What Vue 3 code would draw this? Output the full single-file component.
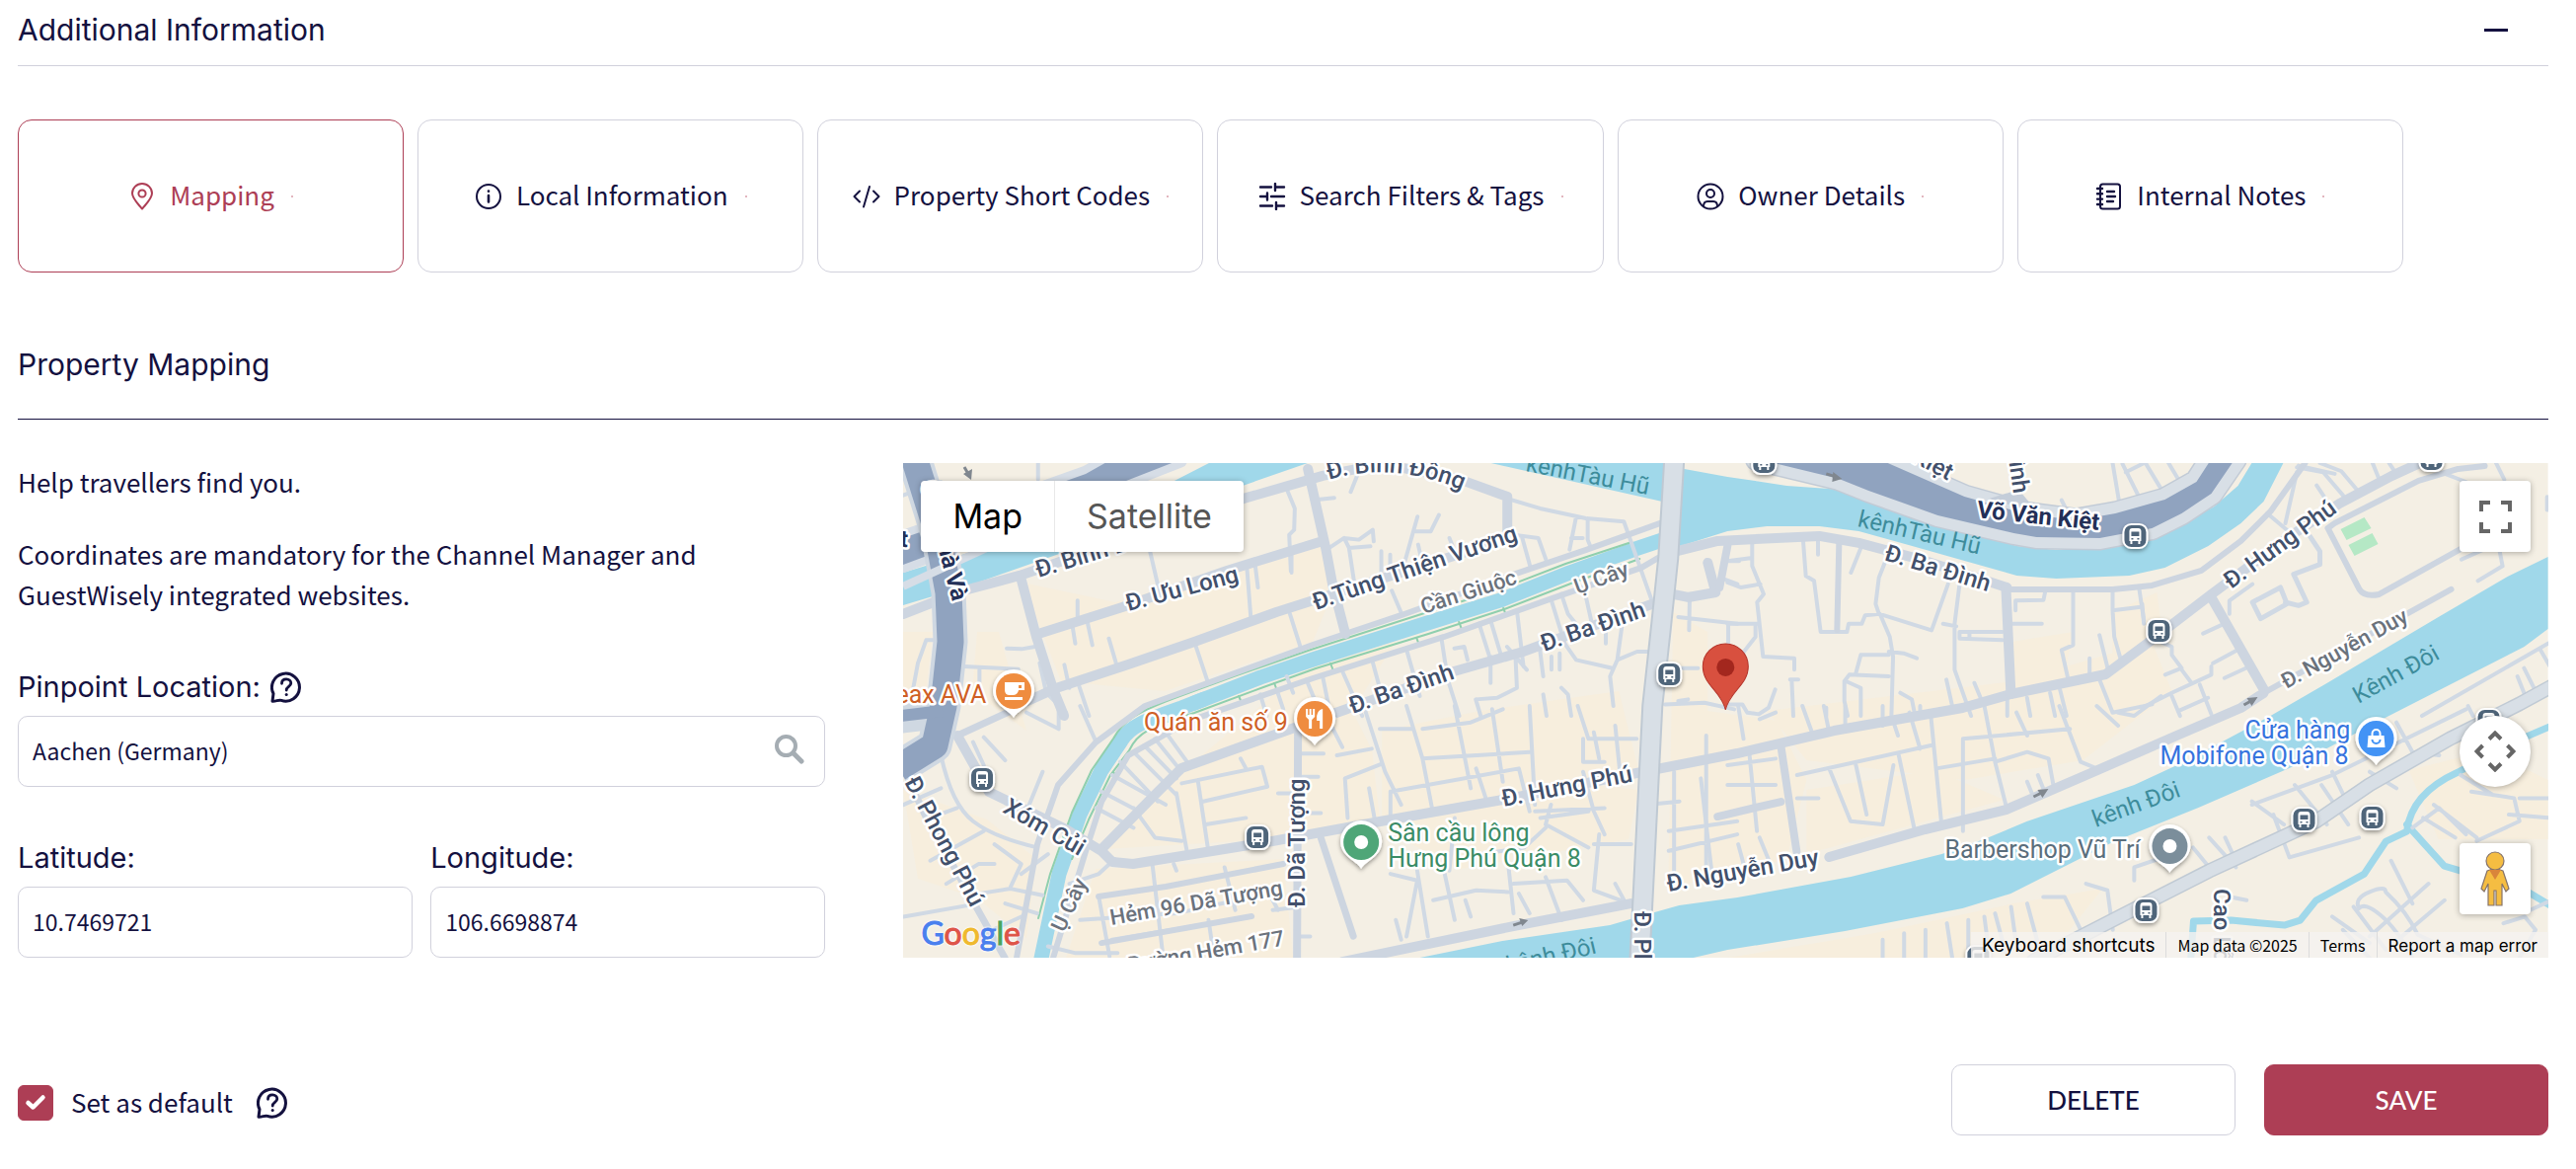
<script setup>
import { ref } from 'vue'

const tabs = [
  { id: 'mapping', label: 'Mapping' },
  { id: 'local', label: 'Local Information' },
  { id: 'codes', label: 'Property Short Codes' },
  { id: 'filters', label: 'Search Filters & Tags' },
  { id: 'owner', label: 'Owner Details' },
  { id: 'notes', label: 'Internal Notes' },
]
const activeTab = ref('mapping')
const location = ref('Aachen (Germany)')
const latitude = ref('10.7469721')
const longitude = ref('106.6698874')
const isDefault = ref(true)

const busStops = [
  [1691, 683], [2163, 543], [1787, 468], [2463, 465], [2187, 639], [995, 789],
  [1274, 848], [2174, 922], [2334, 830], [2403, 828], [2521, 730], [2004, 970],
]
const pois = [
  { x: 1027, y: 700, color: '#ef8c3f', kind: 'cafe' },
  { x: 1332, y: 728, color: '#ef8c3f', kind: 'food' },
  { x: 1379, y: 853, color: '#4fa678', kind: 'dot' },
  { x: 2198, y: 857, color: '#7b8e9b', kind: 'dot' },
  { x: 2407, y: 748, color: '#4393f5', kind: 'shop' },
]
const labels = [
  { t: 'Đ. Bình Đông', x: 1052, y: 585, r: -17 },
  { t: 'Đ. Ưu Long', x: 1143, y: 619, r: -15 },
  { t: 'Đ.Tùng Thiện Vương', x: 1333, y: 618, r: -19 },
  { t: 'Cần Giuộc', x: 1442, y: 622, r: -18, c: 'minor' },
  { t: 'Ụ Cây', x: 1598, y: 602, r: -20, c: 'minor' },
  { t: 'Đ. Ba Đình', x: 1564, y: 660, r: -19 },
  { t: 'Đ. Ba Đình', x: 1370, y: 723, r: -19 },
  { t: 'kênhTàu Hũ', x: 1545, y: 477, r: 11, c: 'water' },
  { t: 'kênhTàu Hũ', x: 1881, y: 533, r: 13, c: 'water' },
  { t: 'Đ. Ba Đình', x: 1908, y: 567, r: 17 },
  { t: 'Võ Văn Kiệt', x: 2002, y: 524, r: 6, c: 'highway' },
  { t: 'Cầu Chà Và', x: 933, y: 490, r: 75, c: 'highway' },
  { t: 'Kiệt', x: 877, y: 552, r: 3, c: 'highway' },
  { t: 'Kiệt', x: 1936, y: 467, r: 28 },
  { t: 'Bình', x: 2033, y: 453, r: 82 },
  { t: 'Đ. Hưng Phú', x: 2260, y: 597, r: -36 },
  { t: 'Đ. Nguyễn Duy', x: 2316, y: 698, r: -29, c: 'minor' },
  { t: 'Kênh Đôi', x: 2389, y: 713, r: -29, c: 'water' },
  { t: 'Đ. Hưng Phú', x: 1523, y: 817, r: -11 },
  { t: 'Đ. Nguyễn Duy', x: 1690, y: 903, r: -10 },
  { t: 'Đ. Phong Phú', x: 916, y: 792, r: 62 },
  { t: 'Xóm Củi', x: 1015, y: 822, r: 30 },
  { t: 'Ụ Cây', x: 1078, y: 945, r: -65, c: 'minor' },
  { t: 'Hẻm 96 Dã Tượng', x: 1126, y: 937, r: -10, c: 'minor' },
  { t: 'Đường Hẻm 177', x: 1144, y: 985, r: -10, c: 'minor' },
  { t: 'Đ. Dã Tượng', x: 1322, y: 919, r: -90 },
  { t: 'Đ. Phạm Hùng', x: 1656, y: 923, r: 90 },
  { t: 'kênh Đôi', x: 1528, y: 986, r: -13, c: 'water' },
  { t: 'kênh Đôi', x: 2123, y: 838, r: -20, c: 'water' },
  { t: 'Cao Lỗ', x: 2243, y: 900, r: 90 },
  { t: 'Reax AVA', x: 892, y: 712, r: 0, c: 'orange' },
  { t: 'Quán ăn số 9', x: 1159, y: 740, r: 0, c: 'orange' },
  { t: 'Sân cầu lông', x: 1406, y: 852, r: 0, c: 'green' },
  { t: 'Hưng Phú Quận 8', x: 1406, y: 878, r: 0, c: 'green' },
  { t: 'Barbershop Vũ Trí', x: 1970, y: 869, r: 0, c: 'slate' },
  { t: 'Cửa hàng', x: 2274, y: 748, r: 0, c: 'blue' },
  { t: 'Mobifone Quận 8', x: 2188, y: 774, r: 0, c: 'blue' },
]
</script>

<template>
  <main class="page">
    <header class="panel-head">
      <h1>Additional Information</h1>
      <button type="button" class="collapse" aria-label="Collapse section"><span></span></button>
    </header>

    <nav class="tabs" aria-label="Additional information sections">
      <button
        v-for="tab in tabs"
        :key="tab.id"
        type="button"
        class="tab"
        :class="{ active: tab.id === activeTab }"
        @click="activeTab = tab.id"
      >
        <svg class="tab-icon" viewBox="0 0 28 28" aria-hidden="true">
          <g v-if="tab.id === 'mapping'">
            <path d="M14 26.500C9 20.500 4 16 4 10.800A10 9.800 0 0 1 24 10.800C24 16 19 20.500 14 26.500Z" />
            <circle cx="14" cy="11" r="3.600" />
          </g>
          <g v-else-if="tab.id === 'local'">
            <circle cx="14" cy="14" r="12" />
            <path d="M14 13v6.500M14 8.600v.2" stroke-width="2.600" />
          </g>
          <g v-else-if="tab.id === 'codes'">
            <path d="M7 8.500 1.500 14 7 19.500M21 8.500 26.500 14 21 19.500M17 4 11 24.500" />
          </g>
          <g v-else-if="tab.id === 'filters'">
            <path d="M2 4.500h11M17 4.500h9M17 1v7M2 14h7M9 10.500v7M13 14h13M2 23.500h12M18 23.500h8M18 20v7" stroke-width="2.400" />
          </g>
          <g v-else-if="tab.id === 'owner'">
            <circle cx="14" cy="14" r="12.500" />
            <circle cx="14" cy="11" r="4" />
            <path d="M7 24c0-4 1.500-5 4-5h6c2.500 0 4 1 4 5" />
          </g>
          <g v-else>
            <rect x="5" y="1.500" width="20" height="25" rx="2.500" />
            <path d="M2 6h5M2 11.300h5M2 16.600h5M2 22h5M12 9h7M12 14h8M12 19h6" stroke-width="2.400" />
          </g>
        </svg>
        <span class="tab-label">{{ tab.label }}</span>
        <i class="tab-dot"></i>
      </button>
    </nav>

    <section class="mapping">
      <h2>Property Mapping</h2>

      <div class="columns">
        <form class="fields" @submit.prevent>
          <div class="intro">
            <p>Help travellers find you.</p>
            <p>Coordinates are mandatory for the Channel Manager and GuestWisely integrated websites.</p>
          </div>

          <div class="field">
            <div class="label-row">
              <label for="location">Pinpoint Location:</label>
              <button type="button" class="help" aria-label="Help: pinpoint location">
                <svg viewBox="0 0 32 32"><path d="M2 30.200 3 22.500A14 14 0 1 1 11 29.400C8.500 28.500 5.500 30.500 2 30.200Z" /><path d="M11.500 12.300c0-2.900 2-4.500 4.600-4.500s4.700 1.700 4.700 4.200c0 3.300-4.600 3.500-4.600 7" stroke-width="2.800" /><circle cx="16.200" cy="23.400" r="1.500" fill="currentColor" stroke="none" /></svg>
              </button>
            </div>
            <div class="search-box">
              <input id="location" v-model="location" type="text" />
              <button type="button" class="search" aria-label="Search">
                <svg viewBox="0 0 30 30"><circle cx="11.500" cy="11.500" r="9.500" /><path d="M19 19 27 27" stroke-width="5" /></svg>
              </button>
            </div>
          </div>

          <div class="pair">
            <div class="field">
              <div class="label-row"><label for="latitude">Latitude:</label></div>
              <input id="latitude" v-model="latitude" type="text" />
            </div>
            <div class="field">
              <div class="label-row"><label for="longitude">Longitude:</label></div>
              <input id="longitude" v-model="longitude" type="text" />
            </div>
          </div>
        </form>

        <div class="map">
          <svg class="map-canvas" viewBox="915 469 1666 501" preserveAspectRatio="xMidYMid slice" role="img" aria-label="Street map">
            <defs>
              <filter id="drop" x="-50%" y="-50%" width="200%" height="200%">
                <feDropShadow dx="0" dy="2" stdDeviation="2" flood-opacity=".4" />
              </filter>
            </defs>
            <rect x="915" y="469" width="1666" height="501" fill="#f4efe4" />

            <!-- built-up blocks -->
            <g fill="#f7eedd">
              <path d="M1036 590 1130 610 1340 548 1350 600 1330 650 1180 700 1075 690ZM990 640 1012 640 1040 740 985 700ZM1420 640 1330 670 1200 780 1120 860 1290 850 1398 830 1390 760 1370 720ZM1110 880 1300 870 1310 970 1080 970ZM915 640 945 640 935 730 915 740ZM915 800 1000 830 1050 870 1040 950 990 910 930 890Z" />
              <path d="M1400 740 1500 720 1640 700 1660 780 1400 830ZM1400 770 1660 800 1650 850 1480 880 1420 850ZM1695 620 1730 640 1730 720 1800 730 1830 790 1810 870 1690 900ZM1790 720 2040 690 2180 650 2200 700 2110 770 1990 790 1830 770ZM1830 800 1960 780 2030 810 1830 865ZM2038 650 2100 640 2090 690 2040 695ZM2140 620 2185 600 2190 640 2140 670Z" />
              <path d="M1750 970 1900 945 2040 915 2130 900 2090 950 2060 970ZM2440 780 2520 760 2581 790 2581 850 2470 850Z" />
            </g>
            <g fill="#b5e8c5">
              <path d="M2371 536 2395 524 2402 535 2377 547ZM2379 552 2403 540 2409 551 2385 563Z" />
            </g>

            <!-- rivers and canals -->
            <g fill="#a0d8ea">
              <path d="M915 580 1080 530 1180 492 1225 469H1325L1256 493 1130 541 985 592 915 613Z" />
              <path d="M1510 469 1684 508 1700 469ZM1690 472 1750 483 1810 492 1867 496 1897 501 1950 522 1997 538 2043 553 2083 557 2150 553 2193 541 2243 513 2267 492 2281 469H2313L2293 508 2270 530 2237 553 2193 575 2157 583 2083 586 2043 583 1990 568 1937 553 1883 538 1843 533 1790 533 1750 538 1690 557Z" />
              <path d="M1438 970 1522 953 1631 937 1655 930 1701 917 1760 909 1875 888 1967 865 2010 850 2053 832 2162 795 2216 770 2300 725 2357 692 2470 625 2540 584 2581 564V637L2557 655 2420 725 2319 778 2227 818 2140 853 2037 905 1988 920 1869 943 1750 962 1715 970Z" />
            </g>
            <g class="stream">
              <path d="M1690 545 1657 556 1590 580 1520 608 1443 632 1330 668 1277 686 1210 712" stroke-width="15" />
              <path d="M1220 708 1197 717C1160 730 1145 735 1136 750L1116 780 1094 825 1073 885 1054 975" stroke-width="15" />
              <path d="M2585 735 2550 750 2490 782C2450 800 2440 825 2438 842L2417 852 2395 885 2346 912 2330 932 2314 937 2260 932 2222 933 2219 975" stroke-width="7" />
              <path d="M2438 835 2476 877 2520 890 2560 903 2585 918" stroke-width="7" />
            </g>
            <g class="bank">
              <path d="M1653 549 1586 571 1516 598 1440 622 1328 658 1250 685 1190 707C1150 722 1138 730 1128 748L1106 780 1086 823 1064 885 1052 930" />
              <path d="M1661 566 1594 590 1524 617 1447 642 1333 677 1280 696 1210 722C1165 736 1152 742 1144 760L1125 785 1103 830 1086 870" />
              <path d="M1255 705l3 7M1291 692l3 8M1348 672l3 8M1435 646l3 8M1478 630l3 8M1523 616l3 8M1128 782l4 5" />
            </g>

            <!-- lanes -->
            <g class="lanes">
              <g transform="translate(910 465) scale(.3334)">
                <path d="M545 430v65M530 510l8 50M575 495l15 70M640 545l25 85M905 570l35 105M1060 335l12 155M1085 325l8 65M1190 470l35 110M1180 90l25 60-2 65-15 15 5 110M765 280l28 120M1195 345v-60M330 575l45 2 45-8M200 630l165 8M247 640v80M430 620l20 90 60 60M505 625l15 70M550 690l30 90M30 780 60 620l25-70h35M425 12v50M90 12l20 70M15 110 130 70M1180 660l20 50M1100 715l20 65M1150 700l20 60M1240 670l25 60" />
              </g>
              <g transform="translate(1330 465) scale(.3334)">
                <path d="M0 125 65 118M135 50l-20 50M50 270 95 240 140 245 182 215 185 250M95 240l15 30 65-5M110 270l15 100M208 280v70M235 290v70M240 400l30 70M318 175 280 310M383 170l-25 50h-45M320 260l10 45M415 240l20 50M590 120 690 150 830 180 945 190 1030 430M800 175l-20 100M835 180v65l10 25M785 240h35M610 230l75 10 25 70M635 235l25 90" />
                <path d="M30 660l20 100M90 645l60 135M180 610l30 110M285 580l40 140M390 540l20 130 35 110M505 500l35 110M540 490l30 100M620 460l20 170M430 575l30-5 10 40M725 430l40 130 35 50 110 25M755 410l20 60 40 50M830 420l20 90M890 560v-50M940 500l-15 110-22 50 10 90M925 610l60-25h45M495 730l65-5 60-30-5-110M540 600v80M590 570l60 70M690 580l10 80M755 695l20 20 10 65M700 715l10 65M495 730l15 50M725 600v40M750 590v50" />
                <path d="M1110 480 1290 500M1145 410l-2 110M1110 635h60M1070 745l120-5 90 20M1110 735l30-5M1250 365l40 15M1265 310h30M1262 500v70" />
              </g>
              <g transform="translate(1750 465) scale(.3334)">
                <path d="M75 255v70l35 85-20 25 18 165 95 5v35M0 310l75-10M0 375l40 15 60-10M0 500h95M85 505v35l-35 45M230 250l8 105 25 15 20 155h80l5-25h40l10-25 45-5 30 70 10 60-5 180 20 60M275 240v50M405 270l-30 75M480 310l-20 50-10 80 10 30 160 50 50-140M705 380l-15 120v140l50 140M655 500l40 8M835 525H705v20l130 5M735 525v20M860 500h95M875 460v-30l85-2 5-25M490 595h-85l-15 55M490 585l45 5 40 15M490 660 370 655l-15 20v60l10 45M360 675l45 20v85M1050 400v165l-35 15 20 90M1170 400v60l80-10M1170 460l5 80 20 70M1250 390l15 100M1130 535l25 100M1100 605v55M665 670l20 90M750 680l25 60M525 710l35 20 10 50M1130 670l40 100 120-25M980 710l15 70M1010 700l20 80M910 725l10 55M850 720v60M190 670h25M195 670l5 110M145 700l-20 55-30 20-35-5-15-25H0M300 755v25M1170 12l20 120M1200 15l50 100M1210 40l80-40M1015 125l20 40" />
              </g>
              <g transform="translate(2170 465) scale(.3334)">
                <path d="M10 12 60 95M80 12l30 50M470 40 435 195M470 25l80 15 60 70M540 12l65 25 55 65M700 12l20 50M750 12l20 30M530 80l30 45M475 20l110 25M380 165l65 55M185 530l65-30M215 620l75-40M250 665l65-30M210 630v25L90 710 0 755M110 765 200 725M90 720l25 60M175 685l35 90M20 540l70 30v25l30 40-50 20M120 640l30 40M265 470v-40l70-50M850 780l383-220M1210 580l40 70M1160 635l30 60M1140 660l20 50M990 750l15 30M1075 12l25 50M1230 115v40M1020 370l75-45-10-50M970 305l90-40M920 45l65 25M0 440l5 60" />
                <path d="M510 235l30 45v40l-80 30 40 85-25 10-40-10M335 435l85-45 20 50-80 45Z" stroke-width="5" />
              </g>
              <g transform="translate(910 715) scale(.542 .3334)">
                <path d="M80 150q20 150 60 200t120 80M240 20l60 50M300 0v70M340 0l30 110M140 110l20 70M160 95l40 70M270 200l-25 100M10 300l70-50M60 340l50-30M60 470l100-90M90 540l60-60h30M150 570l60-15 60 20M210 550l20-70-50-60M280 450l-50 60M10 640l140-40M150 700l80-60M200 600l60 30M320 540l55-30 30-45" />
                <path d="M415 170l70 120M440 140l80 130M460 120l60 100M480 100l50 100M500 80l40 90M400 210l100 90M380 260l70 60M440 310l40 90 50 10M370 310l70 60M560 225l20 220M520 265l20 180M530 235l150-50 10 60-120 45M640 160l10 30M575 360l75-20M475 480l20 280M520 500l-5-20M375 580l20 180M610 490l20 130M690 560l20 60M280 730l50 20h80M340 650l180-20 140-50M400 710l260-70M580 650l10 110M700 620l50-10M750 700h20M710 265h40M755 145h40M755 215h30M755 325h35" />
                <path d="M800 30l30 95M820 150l65-20M870 0l40 200 30 100M840 340l-5-120 70-45M900 70h60M950 0l30 160 20 170M980 70l90-20 60-40M1040 0l30 250M980 160l200-20M1110 10l20 220M1180 0l10 300M1270 0l20 100h90M1280 100v70h40M920 260l240-70 20 130M920 260v70M880 250l10 90M1080 190l20 100M1280 200l20 120 20 70M1190 320l130-10M1200 340l90-20M1220 300l-10 60 80 70M1300 80l10 80M1340 60l10 160M1510 90v400M1440 380l128-30M1440 440l128-50M1450 200v300M1400 300l60-10" />
                <path d="M920 510l50 20-20 170M970 500l20 200M1000 590l80-30 60 5M1020 500l20 150M1060 590l10 50M1140 480l10 150M1150 540l100-10 30 60M1210 520l30 130M1160 570l20 60M1310 390l-10 170 50 30M1340 540l20 60M1040 340l-10 160M1090 450l80-20 40-60M1500 220l20 280M1300 420h70M930 650l10 60" />
              </g>
              <g transform="translate(1750 715) scale(.542 .3334)">
                <path d="M20 0l10 100M60 40l30-20M40 130l15 250M0 180l90-20M0 240h90M130 210l250-90M140 0l20 90M180 0l10 80M220 0v70M290 0v60M360 0v30M380 30l20 330M190 190l40 160 60 10 20-180M130 280h40M240 180l20 150M320 150l30 230M340 20l20 110M440 100l200-30M440 100v280M480 0l20 170 20 130M390 190l110-30M500 170l60-30 40 20 10 90M540 20l20 70M620 0l40 170 30 20M560 230l10 40M580 210l10 40M730 20l30 10 50-60M690 0l40 60M60 400l20 80M20 420l10 60" />
                <path d="M1380 10 1130 210 980 300M1130 200l30 100M1250 50l30 90 50 10M1060 240l60 120M980 290l60 70M1020 330l30 130 130-60M1110 240l50 120M1200 200l50 50M900 400l50 90M870 430l40 80M930 400l20 70M850 440l-90 50v40M970 590l-30-10M670 540l40 20 10 120M590 580h40l30 100M560 600l20 120M530 610l10 120M500 630l20 120M480 640l10 125M450 650v100M410 660l10 105M370 680v85M330 690v75M290 710v55M1240 470l40 130M1310 540 1200 700M1340 590l-80 110M1170 610l60 130M1130 640l70 80M1150 680l50 85M1280 370l50-60 50 80M1300 340l60 60M1320 300l80 100M1390 260l80 20 10 70-80 60M1480 280h60M1460 330l80 10M1370 210l60 60M1500 620l40-30M1450 660l40-20 20 40-30 85" />
                <path d="M1280 765q-30-90-60-130t-40-20q-10-30 20-50t30 0q40 60 60 130l80 60" />
              </g>
            </g>

            <!-- streets -->
            <g class="streets">
              <path d="M915 622 977 598 1033 583 1260 505 1340 482 1400 470 1477 485 1527 503V538" />
              <path d="M1035 588 1050 645 1067 698 1078 725M1052 642 1137 615 1243 578 1340 548M1325 475 1343 555 1350 592 1363 642" />
              <path d="M1030 715 1070 697 1143 673 1210 650 1293 620 1340 605 1530 545" />
              <path d="M1353 722 1473 680 1543 660 1673 612M1365 718 1289 745 1197 778 1170 805 1116 860" />
              <path d="M1700 558 1740 548 1843 543 1883 550 1950 568 2033 595" />
              <path d="M970 745 1002 802 1080 840 1116 862 1127 873 1148 875 1289 852 1398 832 1533 808 1663 782 1760 763 1858 740 1988 717 2037 703 2133 683 2180 648 2240 602 2317 545 2370 510 2423 482 2460 465" />
              <path d="M2032 595 2037 703M1360 974 1533 938 1652 915M1853 868 1950 840 2032 820 2118 783 2205 745 2270 717 2293 702M2240 605 2293 698M1730 570 1738 600 1710 605 1695 602" />
              <path d="M1804 755 1820 862M1740 827 1804 812M1315 742 1314 970M1750 553 1742 595" stroke-width="8" />
              <path d="M915 778 937 825 991 922 1018 970M970 745 1035 715M1338 848 1371 948" stroke-width="7" />
              <path d="M1682 530 1607 557 1533 582 1420 623 1330 653 1223 692 1160 715 1110 752 1072 795 1051 855 1030 970" stroke-width="6" />
              <path d="M1680 565 1663 575 1570 607 1463 645 1330 687 1205 730 1143 765 1116 812 1100 862 1067 970" stroke-width="6" />
              <path d="M1113 908 1181 898 1300 875M1116 955 1268 928M2033 597 2140 597 2180 593 2230 578 2270 548 2300 518 2335 469M2293 702 2483 597M1863 550 1861 638" stroke-width="6" />
              <path d="M2358 535 2365 530 2450 487 2490 475 2517 472M2358 535 2390 597Q2395 605 2410 602L2500 552" stroke-width="6" />
            </g>

            <!-- arterial roads -->
            <g class="arterial">
              <path class="edge" d="M2060 973 2173 915 2238 882 2346 832 2400 795 2482 748 2552 713 2585 695" />
              <path d="M2060 973 2173 915 2238 882 2346 832 2400 795 2482 748 2552 713 2585 695" />
            </g>
            <g stroke-linejoin="round" fill="#90a3bf">
              <path d="M915 545 1010 512 1100 480 1125 466H1195L1100 503 915 572Z" stroke="#d6dde6" stroke-width="16" paint-order="stroke" />
              <path d="M1780 465H1903L1990 503 2050 520 2103 527 2143 520 2193 506 2225 488 2240 465H2264L2240 500 2210 520 2180 535 2127 545 2063 544 2040 540 1963 522 1893 497 1863 485Z" stroke="#c2cbd6" stroke-width="25" paint-order="stroke" />
              <path d="M1780 465H1903L1990 503 2050 520 2103 527 2143 520 2193 506 2225 488 2240 465H2264L2240 500 2210 520 2180 535 2127 545 2063 544 2040 540 1963 522 1893 497 1863 485Z" stroke="#d8dfe6" stroke-width="22" paint-order="stroke" />
              <path d="M2015 505 2045 496 2065 520Z" fill="#c4cdd9" />
            </g>
            <g fill="none" stroke-linejoin="round">
              <path d="M925 460 950 540 961 600 963 650 956 715 947 755 910 778M905 726 955 720" stroke="#cfd8e2" stroke-width="35" />
              <path d="M925 460 950 540 961 600 963 650 956 715 947 755 910 778" stroke="#90a3bf" stroke-width="27" />
              <path d="M905 726 955 720" stroke="#90a3bf" stroke-width="12" />
              <path d="M915 594 1000 555" stroke="#d6dde6" stroke-width="8" />
              <path d="M1696 465 1690 565 1683 632 1674 715 1669 815 1661 975" stroke="#bfc9d3" stroke-width="22" />
              <path d="M1696 465 1690 565 1683 632 1674 715 1669 815 1661 975" stroke="#d8dfe6" stroke-width="18" />
            </g>

            <!-- one-way arrows -->
            <g fill="none" stroke="#80878f" stroke-width="3">
              <path d="M1850 480 1860 483M2060 807 2070 802M1533 937 1542 934M2273 714 2282 709M977 473 981 480" />
            </g>
            <g fill="#80878f">
              <path d="M1866 485 1857 478 1856 488ZM2075 799 2064 800 2069 808ZM1548 932 1539 930 1542 938ZM2287 706 2276 707 2281 715ZM984 486 985 475 976 480Z" />
            </g>

            <path id="binh-dong" d="M1346 486Q1410 467 1480 496" fill="none" />
            <g class="labels">
              <text><textPath href="#binh-dong">Đ. Bình Đông</textPath></text>
              <text
                v-for="(l, i) in labels"
                :key="i"
                :class="l.c"
                :transform="`translate(${l.x} ${l.y}) rotate(${l.r})`"
              >{{ l.t }}</text>
            </g>

            <g v-for="(b, i) in busStops" :key="'b' + i" :transform="`translate(${b[0]} ${b[1]})`">
              <rect x="-12" y="-12" width="24" height="24" rx="8" fill="#50657a" stroke="#fff" stroke-width="2" filter="url(#drop)" />
              <path d="M-6 -5Q-6 -8 -3 -8H3Q6 -8 6 -5V5H5V8H3V5H-3V8H-5V5H-6Z" fill="#fff" />
              <path d="M-4 -4.500H4V0H-4ZM-4 2h2v1.500h-2zM2 2h2v1.500h-2z" fill="#50657a" />
            </g>

            <g v-for="p in pois" :key="p.kind + p.x" :transform="`translate(${p.x} ${p.y})`">
              <path d="M0 27C-4 19-21 15-21-1A21 21 0 0 1 21-1C21 15 4 19 0 27Z" fill="#fff" filter="url(#drop)" />
              <circle r="18" :fill="p.color" />
              <g fill="#fff">
                <circle v-if="p.kind === 'dot'" r="7" />
                <path v-else-if="p.kind === 'cafe'" d="M-9 -9H11V-1H5Q4 4-1 4H-4Q-9 4-9-1ZM5-6v3h3v-3ZM-9 6H9v3H-9Z" fill-rule="evenodd" />
                <path v-else-if="p.kind === 'food'" d="M-9-10h2v6h1.500v-6h2v6H-2v-6H0v8L-3 1v9H-6V1L-9-2ZM8-10V10H5V2H2V-3Q3-9 8-10Z" />
                <g v-else>
                  <path d="M-8 -3H8L9 9H-9Z" />
                  <path d="M-4-2V-5a4 4 0 0 1 8 0v3" fill="none" stroke="#fff" stroke-width="2" />
                  <path d="M-4 1a4 4 0 0 0 8 0" fill="none" stroke="#4393f5" stroke-width="2" />
                </g>
              </g>
            </g>

            <path d="M1748 719C1744 700 1725 694 1725 675A23 23 0 0 1 1771 675C1771 694 1752 700 1748 719Z" fill="#d8503f" stroke="#b5352b" />
            <circle cx="1748" cy="676" r="9" fill="#a3271e" />
          </svg>

          <div class="map-type">
            <button type="button" class="on">Map</button>
            <button type="button">Satellite</button>
          </div>

          <button type="button" class="map-button fullscreen" aria-label="Toggle fullscreen">
            <svg viewBox="0 0 33 33"><path d="M2 11V2H11M22 2H31V11M31 22V31H22M11 31H2V22" fill="none" stroke="#666" stroke-width="4" /></svg>
          </button>
          <div class="map-side">
            <button type="button" class="map-button round" aria-label="Map camera controls">
              <svg class="pan" viewBox="0 0 42 42"><path d="M15 8.500 21 2.500 27 8.500M15 33.500 21 39.500 27 33.500M8.500 15 2.500 21 8.500 27M33.500 15 39.500 21 33.500 27" fill="none" stroke="#666" stroke-width="4" /></svg>
            </button>
            <button type="button" class="map-button" aria-label="Open Street View">
              <svg class="pegman" viewBox="0 0 30 56"><g fill="#f5bd42" stroke="#85736a" stroke-width="1.200"><path d="M7 20Q15 16 23 20L29 38 26 41 22 33V55H16V40H14V55H8V33L4 41 1 38Z" /><circle cx="15" cy="10" r="9" /></g><path d="M9 19H21L15 29Z" fill="#d9853b" /></svg>
            </button>
          </div>

          <div class="google" aria-label="Google"><b>G</b><b class="r">o</b><b class="y">o</b><b>g</b><b class="g">l</b><b class="r">e</b></div>

          <div class="legal">
            <button type="button" class="shortcuts">Keyboard shortcuts</button>
            <span>Map data ©2025</span>
            <a href="#terms">Terms</a>
            <a href="#report" class="report">Report a map error</a>
          </div>
        </div>
      </div>
    </section>

    <footer class="actions">
      <div class="default">
        <input id="default" v-model="isDefault" type="checkbox" />
        <label for="default">Set as default</label>
        <button type="button" class="help" aria-label="Help: set as default">
          <svg viewBox="0 0 32 32"><path d="M2 30.200 3 22.500A14 14 0 1 1 11 29.400C8.500 28.500 5.500 30.500 2 30.200Z" /><path d="M11.500 12.300c0-2.900 2-4.500 4.600-4.500s4.700 1.700 4.700 4.200c0 3.300-4.600 3.500-4.600 7" stroke-width="2.800" /><circle cx="16.200" cy="23.400" r="1.500" fill="currentColor" stroke="none" /></svg>
        </button>
      </div>
      <div class="buttons">
        <button type="button" class="btn">DELETE</button>
        <button type="button" class="btn primary">SAVE</button>
      </div>
    </footer>
  </main>
</template>

<style>
body {
  margin: 0;
  background: #fff;
}
</style>

<style scoped>
* {
  box-sizing: border-box;
}
.page {
  --ink: #14113f;
  --line: #d1d1dc;
  --accent: #ad3e55;
  --geo: Inter, sans-serif;
  --body: "Noto Sans CJK SC", sans-serif;
  padding: 0 28px 34px 18px;
  color: var(--ink);
  font: 400 26px/41px var(--body);
}
h1,
h2,
p {
  margin: 0;
}
h1,
h2 {
  font: 400 30px/42px var(--geo);
}
button {
  margin: 0;
  padding: 0;
  border: 0;
  background: none;
  color: inherit;
  font: inherit;
  cursor: pointer;
}
svg {
  display: block;
}
.panel-head {
  display: flex;
  align-items: center;
  justify-content: space-between;
  height: 67px;
  padding: 0 41px 6px 0;
  border-bottom: 1px solid var(--line);
}
.collapse {
  padding: 10px 0;
}
.collapse span {
  display: block;
  width: 24px;
  height: 3px;
  background: var(--ink);
}
.tabs {
  display: grid;
  grid-template-columns: repeat(6, 1fr);
  gap: 14px;
  padding-right: 147px;
  margin-top: 54px;
}
.tab {
  display: flex;
  align-items: center;
  justify-content: center;
  height: 155px;
  border: 1px solid var(--line);
  border-radius: 14px;
}
.tab.active {
  border-color: var(--accent);
  color: var(--accent);
}
.tab-icon {
  width: 28px;
  height: 28px;
  margin-right: 14px;
  fill: none;
  stroke: currentColor;
  stroke-width: 2;
  stroke-linecap: round;
  stroke-linejoin: round;
}
.tab-label {
  padding-bottom: 4px;
}
.tab-dot {
  width: 2px;
  height: 2px;
  margin-left: 17px;
  background: #e3b6bf;
}
.mapping h2 {
  padding: 72px 0 34px;
  border-bottom: 1px solid var(--ink);
}
.columns {
  display: grid;
  grid-template-columns: 1fr 65%;
  gap: 79px;
  margin-top: 44px;
}
.intro {
  display: grid;
  gap: 32px;
  margin-top: -2px;
  padding-bottom: 2px;
}
.field {
  margin-top: 52px;
}
.label-row {
  display: flex;
  align-items: center;
  height: 40px;
  margin-bottom: 9px;
  font: 400 29px/40px var(--geo);
}
.help {
  color: var(--ink);
}
.help svg {
  width: 32px;
  height: 32px;
  fill: none;
  stroke: currentColor;
  stroke-width: 3;
  stroke-linecap: round;
  stroke-linejoin: round;
}
.label-row .help {
  margin-left: 10px;
}
.search-box {
  position: relative;
}
input[type="text"] {
  display: block;
  width: 100%;
  height: 72px;
  padding: 0 14px 3px;
  border: 1px solid var(--line);
  border-radius: 10px;
  background: #fff;
  color: var(--ink);
  font: 400 23px/32px var(--body);
}
.search {
  position: absolute;
  top: 19px;
  right: 21px;
}
.search svg {
  width: 30px;
  height: 30px;
  fill: none;
  stroke: #a5adb3;
  stroke-width: 4;
  stroke-linecap: round;
}
.pair {
  display: grid;
  grid-template-columns: 1fr 1fr;
  gap: 18px;
}

.map {
  position: relative;
  height: 501px;
  overflow: hidden;
}
.map-canvas {
  width: 100%;
  height: 100%;
}
.stream,
.bank,
.lanes,
.streets,
.arterial {
  fill: none;
  stroke-linejoin: round;
  stroke-linecap: round;
}
.stream {
  stroke: #a0d8ea;
}
.bank {
  stroke: #8fcfae;
  stroke-width: 2;
}
.lanes {
  stroke: #d0d9e4;
  stroke-width: 4;
}
.lanes path {
  vector-effect: non-scaling-stroke;
}
.streets {
  stroke: #cdd5e0;
  stroke-width: 10;
}
.arterial {
  stroke: #d8dfe6;
  stroke-width: 12;
}
.arterial .edge {
  stroke: #c0cad4;
  stroke-width: 15;
}
.labels {
  font: 500 24px Roboto, sans-serif;
  fill: #42506b;
  stroke: #fff;
  stroke-width: 5;
  stroke-linejoin: round;
  paint-order: stroke;
}
.labels .minor {
  font-size: 22px;
  fill: #6b727c;
}
.labels .water {
  font-weight: 400;
  fill: #3d8c9b;
  stroke: none;
}
.labels .highway {
  font-weight: 700;
  fill: #232f57;
}
.labels .orange,
.labels .green,
.labels .slate,
.labels .blue {
  font-weight: 400;
  font-size: 25px;
}
.labels .orange {
  fill: #cf5f25;
}
.labels .green {
  fill: #3b8c66;
}
.labels .slate {
  fill: #5b6e7c;
}
.labels .blue {
  fill: #3573de;
}
.map-type {
  position: absolute;
  top: 18px;
  left: 18px;
  display: flex;
  border-radius: 4px;
  box-shadow: 0 1px 6px rgba(0, 0, 0, .3);
  background: #fff;
  font: 400 34px/72px var(--geo);
}
.map-type button {
  padding: 0 32px;
  color: #565656;
}
.map-type .on {
  color: #000;
  border-right: 1px solid #e8e8e8;
}
.map-button {
  display: flex;
  align-items: center;
  justify-content: center;
  width: 72px;
  height: 72px;
  border-radius: 4px;
  background: #fff;
  box-shadow: 0 1px 6px rgba(0, 0, 0, .3);
}
.map-button svg {
  width: 33px;
  height: 33px;
}
.map-button .pan {
  width: 42px;
  height: 42px;
}
.map-button .pegman {
  width: 30px;
  height: 56px;
}
.fullscreen {
  position: absolute;
  top: 18px;
  right: 18px;
}
.map-side {
  position: absolute;
  right: 18px;
  bottom: 44px;
  display: grid;
  gap: 57px;
}
.round {
  border-radius: 50%;
}
.google {
  position: absolute;
  left: 18px;
  bottom: 5px;
  font: 500 32px/40px Lato, sans-serif;
  -webkit-text-stroke: 1px;
  text-shadow: 0 0 3px #fff, 0 0 3px #fff, 0 0 3px #fff;
}
.google b {
  font-weight: 400;
  color: #4a80ee;
}
.google .r {
  color: #de5448;
}
.google .y {
  color: #efb92e;
}
.google .g {
  color: #4aa35c;
}
.legal {
  position: absolute;
  right: 0;
  bottom: 0;
  display: flex;
  font: 400 16px/26px var(--body);
}
.legal > * {
  padding: 0 11px;
  background: rgba(245, 243, 240, .8);
  color: #000;
  text-decoration: none;
}
.legal > * + * {
  border-left: 1px solid #dcdcdc;
}
.legal .shortcuts {
  padding-top: 2px;
  font: 400 19px/24px var(--geo);
}
.legal .report {
  padding-top: 2px;
  font: 400 17px/24px var(--geo);
}

.actions {
  display: flex;
  align-items: center;
  margin-top: 108px;
}
.default {
  display: flex;
  align-items: center;
  padding-top: 6px;
}
.default label {
  padding: 0 24px 4px 18px;
}
.default input {
  appearance: none;
  width: 36px;
  height: 36px;
  margin: 0;
  border-radius: 6px;
  border: 1px solid var(--accent);
}
.default input:checked {
  background: var(--accent) url("data:image/svg+xml,%3Csvg xmlns='http://www.w3.org/2000/svg' viewBox='0 0 36 36'%3E%3Cpath d='M10.500 18 15.500 22.500 25.500 12.500' fill='none' stroke='%23fff' stroke-width='4.500' stroke-linecap='round' stroke-linejoin='round'/%3E%3C/svg%3E") center / 36px;
}
.buttons {
  display: flex;
  gap: 29px;
  margin-left: auto;
}
.btn {
  width: 288px;
  height: 72px;
  border: 1px solid var(--line);
  border-radius: 10px;
  font: 500 26px/40px Lato, sans-serif;
}
.btn.primary {
  border-color: var(--accent);
  background: var(--accent);
  color: #fff;
}
</style>
